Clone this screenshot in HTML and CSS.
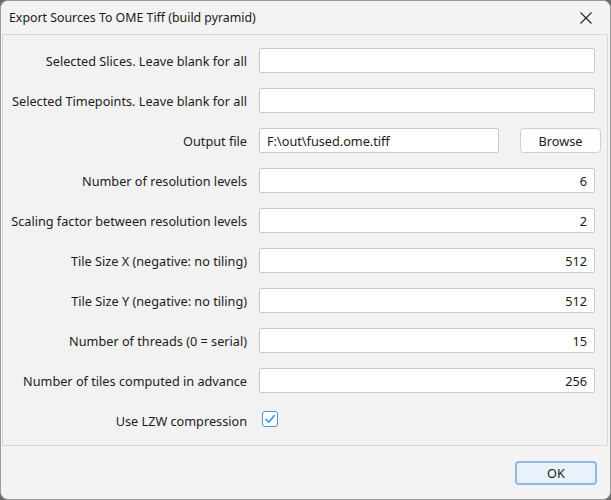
FILE: index.html
```html
<!DOCTYPE html>
<html>
<head>
<meta charset="utf-8">
<link rel="stylesheet" href="styles.css">
</head>
<body>
<div class="window">
  <div class="titlebar">
    <span class="title">Export Sources To OME Tiff (build pyramid)</span>
    <svg class="close" width="12" height="12" viewBox="0 0 12 12"><path d="M0.5 0.5 L11.5 11.5 M11.5 0.5 L0.5 11.5" stroke="#222" stroke-width="1.1" fill="none"/></svg>
  </div>
  <div class="panel">
    <div class="form">
      <label class="lbl">Selected Slices. Leave blank for all</label>
      <div class="field"></div>
      <label class="lbl">Selected Timepoints. Leave blank for all</label>
      <div class="field"></div>
      <label class="lbl">Output file</label>
      <div class="filerow">
        <div class="field">F:\out\fused.ome.tiff</div>
        <button class="btn browse">Browse</button>
      </div>
      <label class="lbl">Number of resolution levels</label>
      <div class="field num">6</div>
      <label class="lbl">Scaling factor between resolution levels</label>
      <div class="field num">2</div>
      <label class="lbl">Tile Size X (negative: no tiling)</label>
      <div class="field num">512</div>
      <label class="lbl">Tile Size Y (negative: no tiling)</label>
      <div class="field num">512</div>
      <label class="lbl">Number of threads (0 = serial)</label>
      <div class="field num">15</div>
      <label class="lbl">Number of tiles computed in advance</label>
      <div class="field num">256</div>
      <label class="lbl">Use LZW compression</label>
      <div class="checkcell">
        <span class="check"><svg width="12" height="12" viewBox="0 0 12 12"><path d="M1.8 6.3 L4.7 9.2 L10.4 2.6" stroke="#3b8ee0" stroke-width="1.6" fill="none" stroke-linecap="round" stroke-linejoin="round"/></svg></span>
      </div>
    </div>
  </div>
  <div class="footer">
    <button class="btn ok">OK</button>
  </div>
</div>
</body>
</html>
```
FILE: styles.css
```css
html, body {
  margin: 0;
  padding: 0;
  background: #6b6b6b;
}
body {
  width: 611px;
  height: 500px;
  overflow: hidden;
  font-family: "Noto Sans", "Open Sans", sans-serif;
  font-size: 12.7px;
  color: #1b1b1b;
}
.window {
  width: 611px;
  height: 500px;
  box-sizing: border-box;
  border: 1px solid #9a9a9a;
  border-radius: 8px;
  background: #f3f3f3;
  display: flex;
  flex-direction: column;
  overflow: hidden;
}
.titlebar {
  height: 33px;
  display: flex;
  align-items: center;
  justify-content: space-between;
  padding: 0 18px 0 8px;
  background: #f3f3f3;
  flex: none;
}
.title {
  font-size: 12.35px;
  color: #1a1a1a;
}
.panel {
  flex: none;
  height: 412px;
  box-sizing: border-box;
  margin: 0 2px 0 1px;
  border: 1px solid #d6d6d6;
  background: #f2f2f2;
  padding: 13px 12px 0 0;
}
.form {
  display: grid;
  grid-template-columns: 244px 1fr;
  column-gap: 12px;
  row-gap: 15px;
  grid-auto-rows: 25px;
}
.lbl {
  display: flex;
  align-items: center;
  justify-content: flex-end;
  white-space: nowrap;
}
.field {
  box-sizing: border-box;
  height: 25px;
  background: #fff;
  border: 1px solid #c9c9c9;
  border-radius: 2px;
  padding: 0 7px;
  display: flex;
  align-items: center;
  white-space: nowrap;
}
.field.num {
  justify-content: flex-end;
}
.filerow {
  display: flex;
  gap: 21px;
  margin-right: -6px;
}
.filerow .field {
  width: 240px;
  flex: none;
}
.btn {
  font-family: inherit;
  font-size: 12.7px;
  color: #1b1b1b;
  box-sizing: border-box;
  border-radius: 4px;
  padding: 0;
}
.browse {
  width: 81px;
  height: 25px;
  background: #fdfdfd;
  border: 1px solid #cfcfcf;
}
.checkcell {
  display: flex;
  align-items: center;
  padding-left: 3px;
}
.check {
  box-sizing: border-box;
  width: 16px;
  height: 16px;
  border: 1px solid #4a94dc;
  border-radius: 3px;
  background: #fff;
  display: flex;
  align-items: center;
  justify-content: center;
  margin-top: -3px;
}
.footer {
  flex: 1;
  display: flex;
  justify-content: flex-end;
  align-items: flex-start;
  padding: 15px 13px 0 0;
}
.ok {
  width: 82px;
  height: 24px;
  background: #e9f1fb;
  border: 2px solid #8fb9e2;
  border-radius: 4px;
}
```
